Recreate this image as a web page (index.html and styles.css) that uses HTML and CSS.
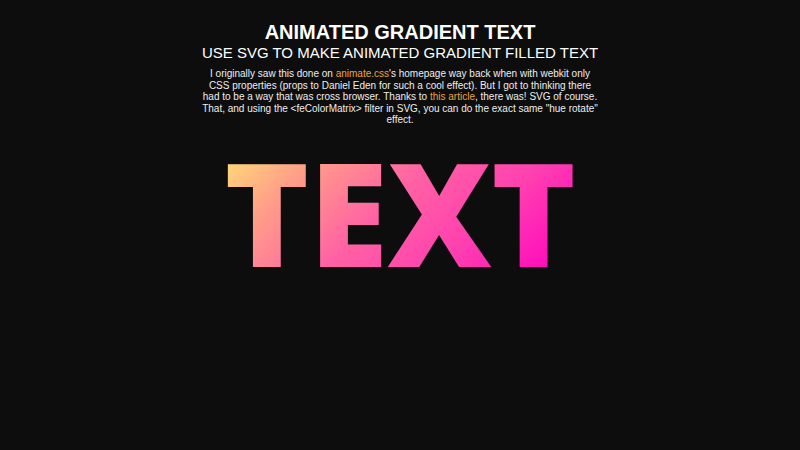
FILE: index.html
```html
<!DOCTYPE html>
<html>
<head>
<meta charset="utf-8">
<link rel="stylesheet" href="styles.css">
</head>
<body>
<div class="page">
  <h1 class="title">ANIMATED GRADIENT TEXT</h1>
  <h2 class="subtitle">USE SVG TO MAKE ANIMATED GRADIENT FILLED TEXT</h2>
  <p class="intro">I originally saw this done on <a class="link" href="#">animate.css</a>'s homepage way back when with webkit only CSS properties (props to Daniel Eden for such a cool effect). But I got to thinking there had to be a way that was cross browser. Thanks to <a class="link" href="#">this article</a>, there was! SVG of course. That, and using the &lt;feColorMatrix&gt; filter in SVG, you can do the exact same "hue rotate" effect.</p>
  <svg class="big" width="800" height="210" viewBox="0 0 800 210">
    <defs>
      <linearGradient id="g" x1="225" y1="47" x2="452" y2="274" gradientUnits="userSpaceOnUse">
        <stop offset="0" stop-color="#ffd878"/>
        <stop offset="0.18" stop-color="#ffa088"/>
        <stop offset="0.45" stop-color="#ff62a4"/>
        <stop offset="0.7" stop-color="#ff40b0"/>
        <stop offset="1" stop-color="#ff00c0"/>
      </linearGradient>
    </defs>
    <text class="bigtext" x="400" y="151" text-anchor="middle" fill="url(#g)">TEXT</text>
  </svg>
</div>
</body>
</html>
```
FILE: styles.css
```css
html, body {
  margin: 0;
  padding: 0;
  background: #0d0d0d;
}
.page {
  width: 800px;
  display: flex;
  flex-direction: column;
  align-items: center;
  color: #ffffff;
  font-family: "Liberation Sans", Arial, sans-serif;
  padding-top: 21px;
}
.title {
  margin: 0;
  font-size: 20px;
  line-height: 23px;
  font-weight: bold;
}
.subtitle {
  margin: 0;
  font-size: 15px;
  line-height: 18px;
  font-weight: normal;
}
.intro {
  margin: 6px 0 0;
  width: 400px;
  text-align: center;
  font-size: 10px;
  line-height: 11.6px;
  color: #eeeeee;
}
.link {
  color: #e8a33d;
  text-decoration: none;
}
.big {
  display: block;
  margin-top: -10px;
}
.bigtext {
  font-family: "Open Sans", sans-serif;
  font-weight: 800;
  font-size: 144px;
  letter-spacing: -0.5px;
}
```
